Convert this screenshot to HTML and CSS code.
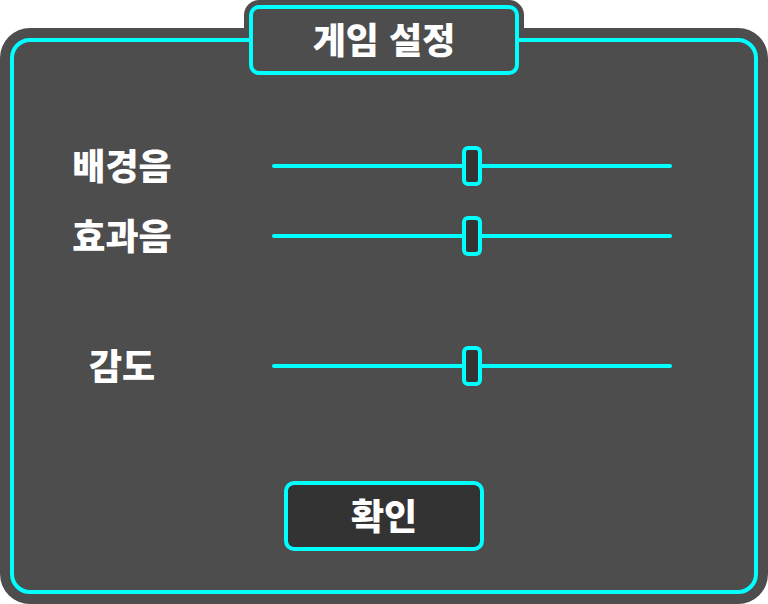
FILE: index.html
```html
<!DOCTYPE html>
<html lang="ko">
<head>
<meta charset="utf-8">
<meta name="viewport" content="width=device-width, initial-scale=1">
<title>게임 설정</title>
<link rel="stylesheet" href="styles.css">
</head>
<body>
<main class="dialog">
  <header class="title-tab">
    <h1 class="title">게임 설정</h1>
  </header>
  <div class="panel">
    <form class="frame">
      <div class="group">
        <div class="row">
          <label class="label" for="bgm">배경음</label>
          <input class="slider" id="bgm" type="range" min="0" max="100" value="50">
        </div>
        <div class="row">
          <label class="label" for="sfx">효과음</label>
          <input class="slider" id="sfx" type="range" min="0" max="100" value="50">
        </div>
      </div>
      <div class="group">
        <div class="row">
          <label class="label" for="sensitivity">감도</label>
          <input class="slider" id="sensitivity" type="range" min="0" max="100" value="50">
        </div>
      </div>
      <button class="confirm" type="button">확인</button>
    </form>
  </div>
</main>
</body>
</html>
```
FILE: styles.css
```css
:root {
  --accent: #00ffff;
  --surface: #4d4d4d;
  --control: #333333;
}

* {
  box-sizing: border-box;
}

body {
  margin: 0;
  background: #ffffff;
  color: #ffffff;
  font-family: "Noto Sans CJK KR", sans-serif;
  font-size: 36px;
  font-weight: 900;
  line-height: 36px;
}

.dialog {
  display: flex;
  flex-direction: column;
}

/* The tab's backing sits behind the panel; only the title box rises above it. */
.title-tab {
  align-self: center;
  width: 280px;
  margin-bottom: -52px;
  padding: 5px;
  border-radius: 15px;
  background: var(--surface);
}

.title {
  position: relative;
  margin: 0;
  padding: 11px 0 15px;
  border: 4px solid var(--accent);
  border-radius: 10px;
  background: var(--surface);
  font: inherit;
  text-align: center;
}

.panel {
  padding: 10px;
  border-radius: 30px;
  background: var(--surface);
}

.frame {
  display: flex;
  flex-direction: column;
  gap: 90px;
  padding: 104px 0 39px;
  border: 4px solid var(--accent);
  border-radius: 20px;
}

.group {
  display: flex;
  flex-direction: column;
  gap: 30px;
}

.row {
  display: grid;
  grid-template-columns: 216px 1fr;
  column-gap: 42px;
  align-items: center;
  padding-right: 82px;
}

.label {
  padding-bottom: 4px;
  text-align: center;
}

.slider {
  appearance: none;
  width: 100%;
  height: 40px;
  margin: 0;
  background: transparent;
  cursor: pointer;
}

.slider::-webkit-slider-runnable-track {
  height: 4px;
  border-radius: 2px;
  background: var(--accent);
}

.slider::-webkit-slider-thumb {
  appearance: none;
  box-sizing: border-box;
  width: 20px;
  height: 40px;
  margin-top: -18px;
  border: 4px solid var(--accent);
  border-radius: 6px;
  background: var(--control);
}

.confirm {
  align-self: center;
  width: 200px;
  margin-top: 5px;
  padding: 11px 0 15px;
  border: 4px solid var(--accent);
  border-radius: 10px;
  background: var(--control);
  color: inherit;
  font: inherit;
  cursor: pointer;
}
```
